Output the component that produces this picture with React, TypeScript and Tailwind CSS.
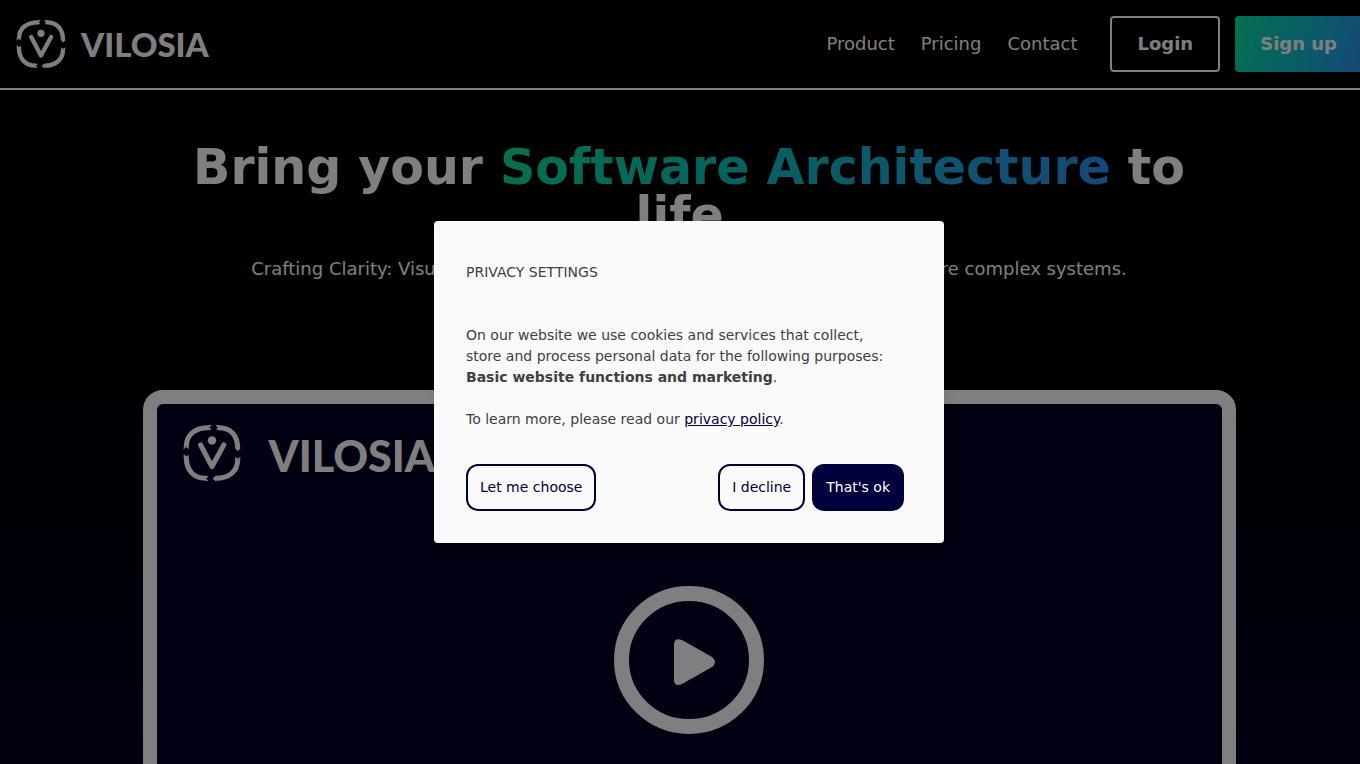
import clsx from "clsx";

const navLinks = [
  { href: "#product", label: "Product" },
  { href: "#pricing", label: "Pricing" },
  { href: "#contact", label: "Contact" },
];

function LogoMark({ className }: { className?: string }) {
  return (
    <svg viewBox="0 0 168 166" fill="none" stroke="currentColor" className={className} aria-hidden="true">
      <g strokeWidth="15">
        <path d="M8 64C8 28 34 8 74 8" />
        <path d="M104 8C139 8 160 31 160 68" />
        <path d="M8 98C8 133 29 158 65 158" />
        <path d="M160 102C160 138 134 158 96 158" />
      </g>
      {/* pointed ends of the four arcs */}
      <g fill="currentColor" stroke="none">
        <path d="M105 0H94L101 7L97 15H105Z" />
        <path d="M153 67V70L161 78L168 70V67Z" />
        <path d="M0 99V86L7 93L15 89V99Z" />
        <path d="M64 151H74L67 159L73 166H64Z" />
        <path d="M97 151H94L86 159L94 166H97Z" />
        <path d="M153 103V94L161 99L168 94V103Z" />
        <path d="M0 63V72L7 66L15 71V63Z" />
        <path d="M73 0H83L77 7L82 15H73Z" />
      </g>
      <path d="M50 59L84 123L119 59" strokeWidth="15" strokeLinecap="round" strokeLinejoin="round" />
      <circle cx="84" cy="46" r="12.5" fill="currentColor" stroke="none" />
    </svg>
  );
}

function Logo({ large }: { large?: boolean }) {
  return (
    <span className={clsx("flex items-center text-white", large ? "gap-7" : "gap-[15px]")}>
      <LogoMark className={large ? "h-14 w-[58px]" : "h-12 w-[50px]"} />
      <span
        className={clsx(
          "font-[Lato,sans-serif] font-black leading-none",
          large ? "pt-1 text-[43px]" : "text-[33px]"
        )}
      >
        VILOSIA
      </span>
    </span>
  );
}

function Header() {
  return (
    <header className="flex items-center justify-between border-b-2 border-white p-4">
      <a href="#home">
        <Logo />
      </a>
      <nav className="flex items-center text-lg text-white">
        <div className="mr-[33px] flex gap-[26px]">
          {navLinks.map(({ href, label }) => (
            <a key={href} href={href}>
              {label}
            </a>
          ))}
        </div>
        <div className="flex gap-[15px] font-bold">
          <a href="#login" className="rounded border-2 border-white px-[25px] py-3">
            Login
          </a>
          <a
            href="#signup"
            className="flex items-center rounded bg-linear-110 from-[#10e09c] to-[#2c90f0] px-[25px]"
          >
            Sign up
          </a>
        </div>
      </nav>
    </header>
  );
}

function Hero() {
  return (
    <section className="mx-auto max-w-[1093px] pt-[54px] text-center text-white">
      <h1 className="text-[49px] leading-[48px] font-bold">
        Bring your{" "}
        <span className="bg-linear-to-r from-[#10e09c] to-[#2c90f0] bg-clip-text text-transparent">
          Software Architecture
        </span>{" "}
        to life.
      </h1>
      <p className="mt-[15px] text-lg">
        Crafting Clarity: Visualize and document your software to better manage more complex systems.
      </p>
    </section>
  );
}

function VideoCard() {
  return (
    <section className="mx-auto mt-[107px] max-w-[1093px] rounded-[20px] border-14 border-white bg-[#000024] px-[26px] pt-[21px] pb-24">
      <Logo large />
      <div className="mt-[105px] flex justify-center">
        <button type="button" aria-label="Play video" className="text-white">
          <svg viewBox="0 0 150 148" className="h-[148px] w-[150px]">
            <ellipse cx="75" cy="74" rx="67.5" ry="66.5" fill="none" stroke="currentColor" strokeWidth="15" />
            <path
              d="M60 59Q60 51 68 54L98 71Q104 76 98 81L68 98Q60 101 60 94Z"
              fill="currentColor"
            />
          </svg>
        </button>
      </div>
    </section>
  );
}

function PrivacyDialog() {
  const outline = "rounded-xl border-2 border-[#00003c] px-3 py-[11px] text-[#00003c]";

  return (
    <div className="absolute inset-0 flex items-center justify-center bg-black/50">
      <div
        role="dialog"
        aria-labelledby="privacy-title"
        className="w-full max-w-[510px] rounded bg-[#fafafa] pt-[41px] pr-10 pb-8 pl-8 text-sm leading-[21px] text-[#404040] shadow-lg"
      >
        <h2 id="privacy-title">PRIVACY SETTINGS</h2>
        <p className="mt-[42px] pr-2">
          On our website we use cookies and services that collect, store and process personal data for the
          following purposes: <strong>Basic website functions and marketing</strong>.
        </p>
        <p className="mt-[21px]">
          To learn more, please read our{" "}
          <a href="#privacy" className="text-[#00003c] underline">
            privacy policy
          </a>
          .
        </p>
        <div className="mt-[34px] flex justify-between">
          <button type="button" className={outline}>
            Let me choose
          </button>
          <div className="flex gap-[7px]">
            <button type="button" className={outline}>
              I decline
            </button>
            <button type="button" className="rounded-xl border-2 border-[#00003c] bg-[#00003c] px-3 py-[11px] text-white">
              That's ok
            </button>
          </div>
        </div>
      </div>
    </div>
  );
}

export default function App() {
  return (
    <div className="h-screen overflow-hidden bg-black font-['DejaVu_Sans',sans-serif]">
      {/* the page runs slightly past the right edge of the window */}
      <div className="relative h-full w-[calc(100%+18px)] overflow-hidden bg-linear-to-b from-black to-[#000022]">
        <Header />
        <main>
          <Hero />
          <VideoCard />
        </main>
        <PrivacyDialog />
      </div>
    </div>
  );
}
